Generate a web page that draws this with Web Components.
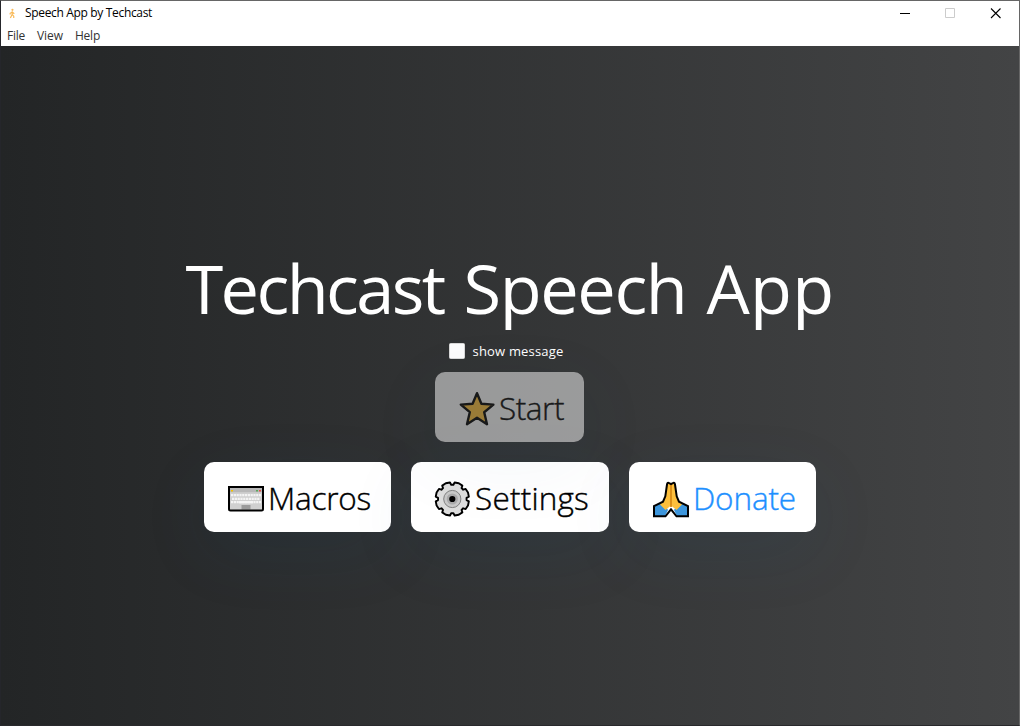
<!DOCTYPE html>
<html lang="en">
<head>
<meta charset="utf-8">
<title>Speech App by Techcast</title>
<style>
html,body{margin:0;height:100%;overflow:hidden;background:#232526;font-family:"Open Sans","Noto Sans",sans-serif}
</style>
</head>
<body>
<app-window></app-window>
<script>
const define = (name, html, ready) => customElements.define(name, class extends HTMLElement {
  connectedCallback() {
    if (this.shadowRoot) return;
    this.attachShadow({ mode: 'open' }).innerHTML = html;
    if (ready) ready(this);
  }
});

/* Text tracked so that it takes up exactly the advance given in "width". */
define('fit-text', `<style>:host{display:block;white-space:pre}span{display:inline-block}</style><span><slot></slot></span>`, el => {
  const span = el.shadowRoot.querySelector('span');
  const target = +el.getAttribute('width');
  const n = el.textContent.length;
  el.style.width = target + 'px';
  span.style.letterSpacing = (target - span.getBoundingClientRect().width) / n + 'px';
});

define('title-bar', `<style>
:host{display:flex;height:25px;align-items:center;background:#fff;color:#000;font-size:12px;line-height:22px}
.logo{width:10px;height:11px;margin:0 8px 1px 6px}
fit-text{margin-bottom:2px}
.space{flex:1}
.controls{display:flex;gap:34px;margin-right:18px}
.controls svg{width:11px;height:11px;display:block}
</style>
<svg class="logo" viewBox="0 0 10 12" fill="none" stroke="#f9b957" stroke-width="1.3"><circle cx="5.5" cy="2" r="1.2" fill="#f9b957" stroke="none"/><path d="M5.2 3.5v4M5 4.5L3 5.8v1.4M5.5 4.6l2 1.7M5 7.3l-1.8 3.7M5.3 7.3l1.6 1.6v2"/></svg>
<fit-text width="127">Speech App by Techcast</fit-text><div class="space"></div>
<div class="controls">
<svg viewBox="0 0 11 11"><path d="M0 5.5h10" stroke="#000"/></svg>
<svg viewBox="0 0 11 11"><path d="M.5.5h9v9h-9z" fill="none" stroke="#ccc"/></svg>
<svg viewBox="0 0 11 11"><path d="M1 .5l9.5 9.5M10.5.5L1 10" stroke="#000" stroke-width="1.1"/></svg>
</div>`);

define('menu-bar', `<style>
:host{display:flex;height:20px;background:#fff;color:#333;font-size:12px;line-height:19px;padding-left:6px;gap:12px}
</style><fit-text width="18">File</fit-text><fit-text width="26">View</fit-text><fit-text width="25">Help</fit-text>`);

define('check-option', `<style>
:host{display:flex;align-items:center;height:16px;gap:8px;color:#fff;font-size:13px;line-height:16px}
i{width:14px;height:14px;background:#fcfcfc;border:1px solid #d8d8d8;border-radius:1.5px}
</style><i></i><slot></slot>`);

define('app-button', `<style>
:host{display:flex;box-sizing:border-box;height:70px;border-radius:10px;background:#fff;color:#000;align-items:center;padding:3px 0 0 23px;font-size:31.5px;font-weight:300;line-height:68px;box-shadow:0 20px 70px rgba(0,90,140,.09)}
:host([disabled]){opacity:.5}
:host([link]){color:#1e90ff}
::slotted(svg){width:38px;height:38px;flex:none;margin-right:3px}
::slotted(fit-text){margin-bottom:2px;-webkit-text-stroke:.4px currentColor}
</style><slot></slot>`);

define('app-window', `<style>
:host{display:flex;flex-direction:column;box-sizing:border-box;width:1020px;height:726px;border:1px solid #666;border-left-color:#25262b;border-bottom-color:#29292c;background:linear-gradient(90deg,#232526,#434445)}
main{display:flex;flex-direction:column;align-items:center;padding-top:197px}
h1{display:flex;gap:20px;margin:0;font-size:68.5px;font-weight:400;line-height:90px;color:#fff}
check-option{margin:10px 8px 13px 0}
.row{display:flex;gap:20px;margin-top:20px}
.start{width:149px;margin-right:1px}.macros,.donate{width:187px}.settings{width:198px}
</style>
<title-bar></title-bar><menu-bar></menu-bar>
<main>
<h1><fit-text width="258">Techcast</fit-text><fit-text width="223">Speech</fit-text><fit-text width="128">App</fit-text></h1>
<check-option><fit-text width="91">show message</fit-text></check-option>
<app-button class="start" disabled>
<svg viewBox="0 0 38 38"><path d="M19 3.2l4.4 10.6 12 .8-9.2 7.6 2.8 12L19 27.8 9 34.2l2.8-12L2.8 14.6l11.8-.8z" fill="#ffc23a" stroke="#000" stroke-width="2.4" stroke-linejoin="round"/></svg>
<fit-text width="65">Start</fit-text></app-button>
<div class="row">
<app-button class="macros">
<svg viewBox="0 0 38 38"><path d="M2 7h34v22q0 1.5-1.5 1.5h-31Q2 30.500 2 29z" fill="#d0d0d0"/><path d="M3 8h32v4.200H3z" fill="#b8b8b8"/><path d="M4 10h2v1.500H4z" fill="#f4c400"/><path d="M29 10h2v1.500h-2z" fill="#5ca65c"/><path d="M32 10h2v1.500h-2z" fill="#e65346"/><path d="M4 15.200h30M5 18.800h28M4 22.200h30" stroke="#f4f4f4" stroke-width="2.200" stroke-dasharray="2.200 .6"/><path d="M12 22.200h14" stroke="#f4f4f4" stroke-width="2.200"/><path d="M14.500 25h9v4.500h-9z" fill="#9b9b9b"/><path d="M2 7h34v22q0 1.500-1.500 1.500h-31Q2 30.500 2 29z" fill="none" stroke="#000" stroke-width="2"/></svg>
<fit-text width="103">Macros</fit-text></app-button>
<app-button class="settings">
<svg class="gear" viewBox="0 0 38 38"></svg>
<fit-text width="114">Settings</fit-text></app-button>
<app-button class="donate" link>
<svg viewBox="0 0 38 38"><path d="M2 26.500l9-4.500 5 8-3 6H2zM36 26.500L27 22l-5 8 3 6h11z" fill="#3d96dc"/><path d="M15 3h8l2 15 3 4 2 2.500-5.500 5.500-5.500-4.500-5.500 4.500L8 24.500l2-2.500 3-4z" fill="#fdbf3c"/><path d="M19 4v23" stroke="#d98b16" stroke-width="1.800"/><path d="M2 36.300V26.200l9-4.500 2.300-5.400L15 4.500q.5-2.400 2.200-1.400l1.800 1 1.800-1q1.700-1 2.200 1.400l1.700 11.800 2.300 5.400 9 4.500v10.100H24.500L19 29.300l-5.500 7z" fill="none" stroke="#000" stroke-width="2"/></svg>
<fit-text width="103">Donate</fit-text></app-button>
</div>
</main>`, el => {
  // Eight-toothed gear outline, built from polar points.
  const pts = [];
  for (let i = 0; i < 8; i++) {
    const c = i * 45 + 22.5;
    for (const [d, r] of [[-18, 14.3], [-14.5, 16.7], [0, 17], [14.5, 16.7], [18, 14.3]]) {
      const a = (c + d) * Math.PI / 180;
      pts.push((18.3 + r * Math.cos(a)).toFixed(2) + ',' + (19 + r * Math.sin(a)).toFixed(2));
    }
  }
  el.shadowRoot.querySelector('.gear').innerHTML = `<polygon points="${pts.join(' ')}" fill="#dedede" stroke="#000" stroke-width="1.9" stroke-linejoin="round"/><circle cx="18.3" cy="19" r="8.6" fill="#c9c9c9" stroke="#777" stroke-width=".9"/><circle cx="18.3" cy="19" r="5.6" fill="#aaa"/><circle cx="18.3" cy="19" r="3.1"/>`;
});
</script>
</body>
</html>
